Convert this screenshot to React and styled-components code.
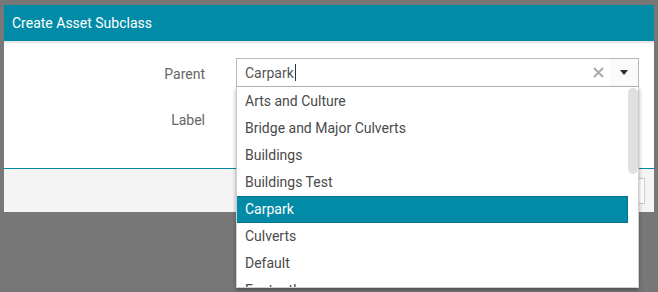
import React from "react";
import styled, { createGlobalStyle } from "styled-components";

const Global = createGlobalStyle`
  html, body { margin: 0; padding: 0; }
  body {
    background: #777777;
    font-family: Roboto, "Liberation Sans", Arial, sans-serif;
    font-size: 14px;
    overflow: hidden;
  }
`;

const Page = styled.div`
  width: 658px;
  height: 292px;
  padding: 5px 4px 0 4px;
  box-sizing: border-box;
`;

const Dialog = styled.div`
  width: 650px;
  background: #ffffff;
  display: flex;
  flex-direction: column;
`;

const Header = styled.div`
  height: 36px;
  background: #018ba7;
  color: #ffffff;
  display: flex;
  align-items: center;
  padding-left: 8px;
  border-bottom: 2px solid #e8e8e8;
  font-size: 14px;
`;

const Body = styled.div`
  height: 126px;
  padding-top: 15px;
  box-sizing: border-box;
  border-bottom: 1px solid #018ba7;
  display: grid;
  grid-template-columns: 201px 403px;
  column-gap: 31px;
  row-gap: 17px;
  align-content: start;
`;

const FieldLabel = styled.div`
  text-align: right;
  color: #666666;
  line-height: 29px;
  height: 29px;
  padding-top: 2px;
  box-sizing: border-box;
`;

const Combo = styled.div`
  position: relative;
  height: 29px;
`;

const InputBox = styled.div`
  height: 29px;
  box-sizing: border-box;
  border: 1px solid #b8b8b8;
  background: #fff;
  display: flex;
  align-items: center;
  padding-left: 8px;
  color: #555555;
`;

const InputText = styled.span`
  flex: 1;
  display: flex;
  align-items: center;
`;

const Caret = styled.span`
  display: inline-block;
  width: 1px;
  height: 17px;
  background: #333;
  margin-left: 1px;
`;

const ClearBtn = styled.span`
  width: 24px;
  height: 27px;
  display: flex;
  align-items: center;
  justify-content: center;
`;

const ArrowBtn = styled.span`
  width: 28px;
  height: 27px;
  background: #fafafa;
  display: flex;
  align-items: center;
  justify-content: center;
`;

const Dropdown = styled.div`
  position: absolute;
  top: 29px;
  left: 0;
  width: 403px;
  height: 201px;
  box-sizing: border-box;
  background: #fff;
  border: 1px solid #d0d0d0;
  border-top: none;
  box-shadow: 0 2px 4px rgba(0, 0, 0, 0.35);
  display: flex;
  overflow: hidden;
  z-index: 5;
`;

const List = styled.div`
  flex: 1;
  overflow: hidden;
  padding-top: 1px;
`;

const ScrollTrack = styled.div`
  width: 10px;
  padding-top: 1px;
  background: #fff;
`;

const ScrollThumb = styled.div`
  width: 10px;
  height: 86px;
  border-radius: 5px;
  background: #e0e0e0;
`;

const Item = styled.div`
  height: 27px;
  box-sizing: border-box;
  display: flex;
  align-items: center;
  padding-left: 8px;
  padding-bottom: 1px;
  color: ${(p) => (p.$selected ? "#ffffff" : "#4a4a4a")};
  background: ${(p) => (p.$selected ? "#018ba7" : "transparent")};
  border: 1px solid ${(p) => (p.$selected ? "#00768e" : "transparent")};
  border-left: none;
  white-space: nowrap;
`;

const Footer = styled.div`
  height: 43px;
  background: #f4f4f4;
  display: flex;
  align-items: center;
  justify-content: flex-end;
  padding-right: 9px;
`;

const FooterButton = styled.div`
  width: 70px;
  height: 26px;
  box-sizing: border-box;
  background: #fff;
  border: 1px solid #cccccc;
`;

const items = [
  "Arts and Culture",
  "Bridge and Major Culverts",
  "Buildings",
  "Buildings Test",
  "Carpark",
  "Culverts",
  "Default",
  "Footpath",
  "Furniture",
  "Kerb and Channel",
  "Land",
  "Parks",
  "Playgrounds",
  "Roads",
  "Stormwater",
  "Street Lights",
  "Water Supply",
];

export default function App() {
  return (
    <Page>
      <Global />
      <Dialog>
        <Header>Create Asset Subclass</Header>
        <Body>
          <FieldLabel>Parent</FieldLabel>
          <Combo>
            <InputBox>
              <InputText>
                Carpark
                <Caret />
              </InputText>
              <ClearBtn>
                <svg width="11" height="11" viewBox="0 0 11 11">
                  <path d="M1 1 L10 10 M10 1 L1 10" stroke="#aaaaaa" strokeWidth="2" />
                </svg>
              </ClearBtn>
              <ArrowBtn>
                <svg width="8" height="5" viewBox="0 0 8 5">
                  <path d="M0 0 L8 0 L4 5 Z" fill="#2e2e2e" />
                </svg>
              </ArrowBtn>
            </InputBox>
            <Dropdown>
              <List>
                {items.map((it) => (
                  <Item key={it} $selected={it === "Carpark"}>
                    {it}
                  </Item>
                ))}
              </List>
              <ScrollTrack>
                <ScrollThumb />
              </ScrollTrack>
            </Dropdown>
          </Combo>
          <FieldLabel>Label</FieldLabel>
          <Combo>
            <InputBox />
          </Combo>
        </Body>
        <Footer>
          <FooterButton />
        </Footer>
      </Dialog>
    </Page>
  );
}
